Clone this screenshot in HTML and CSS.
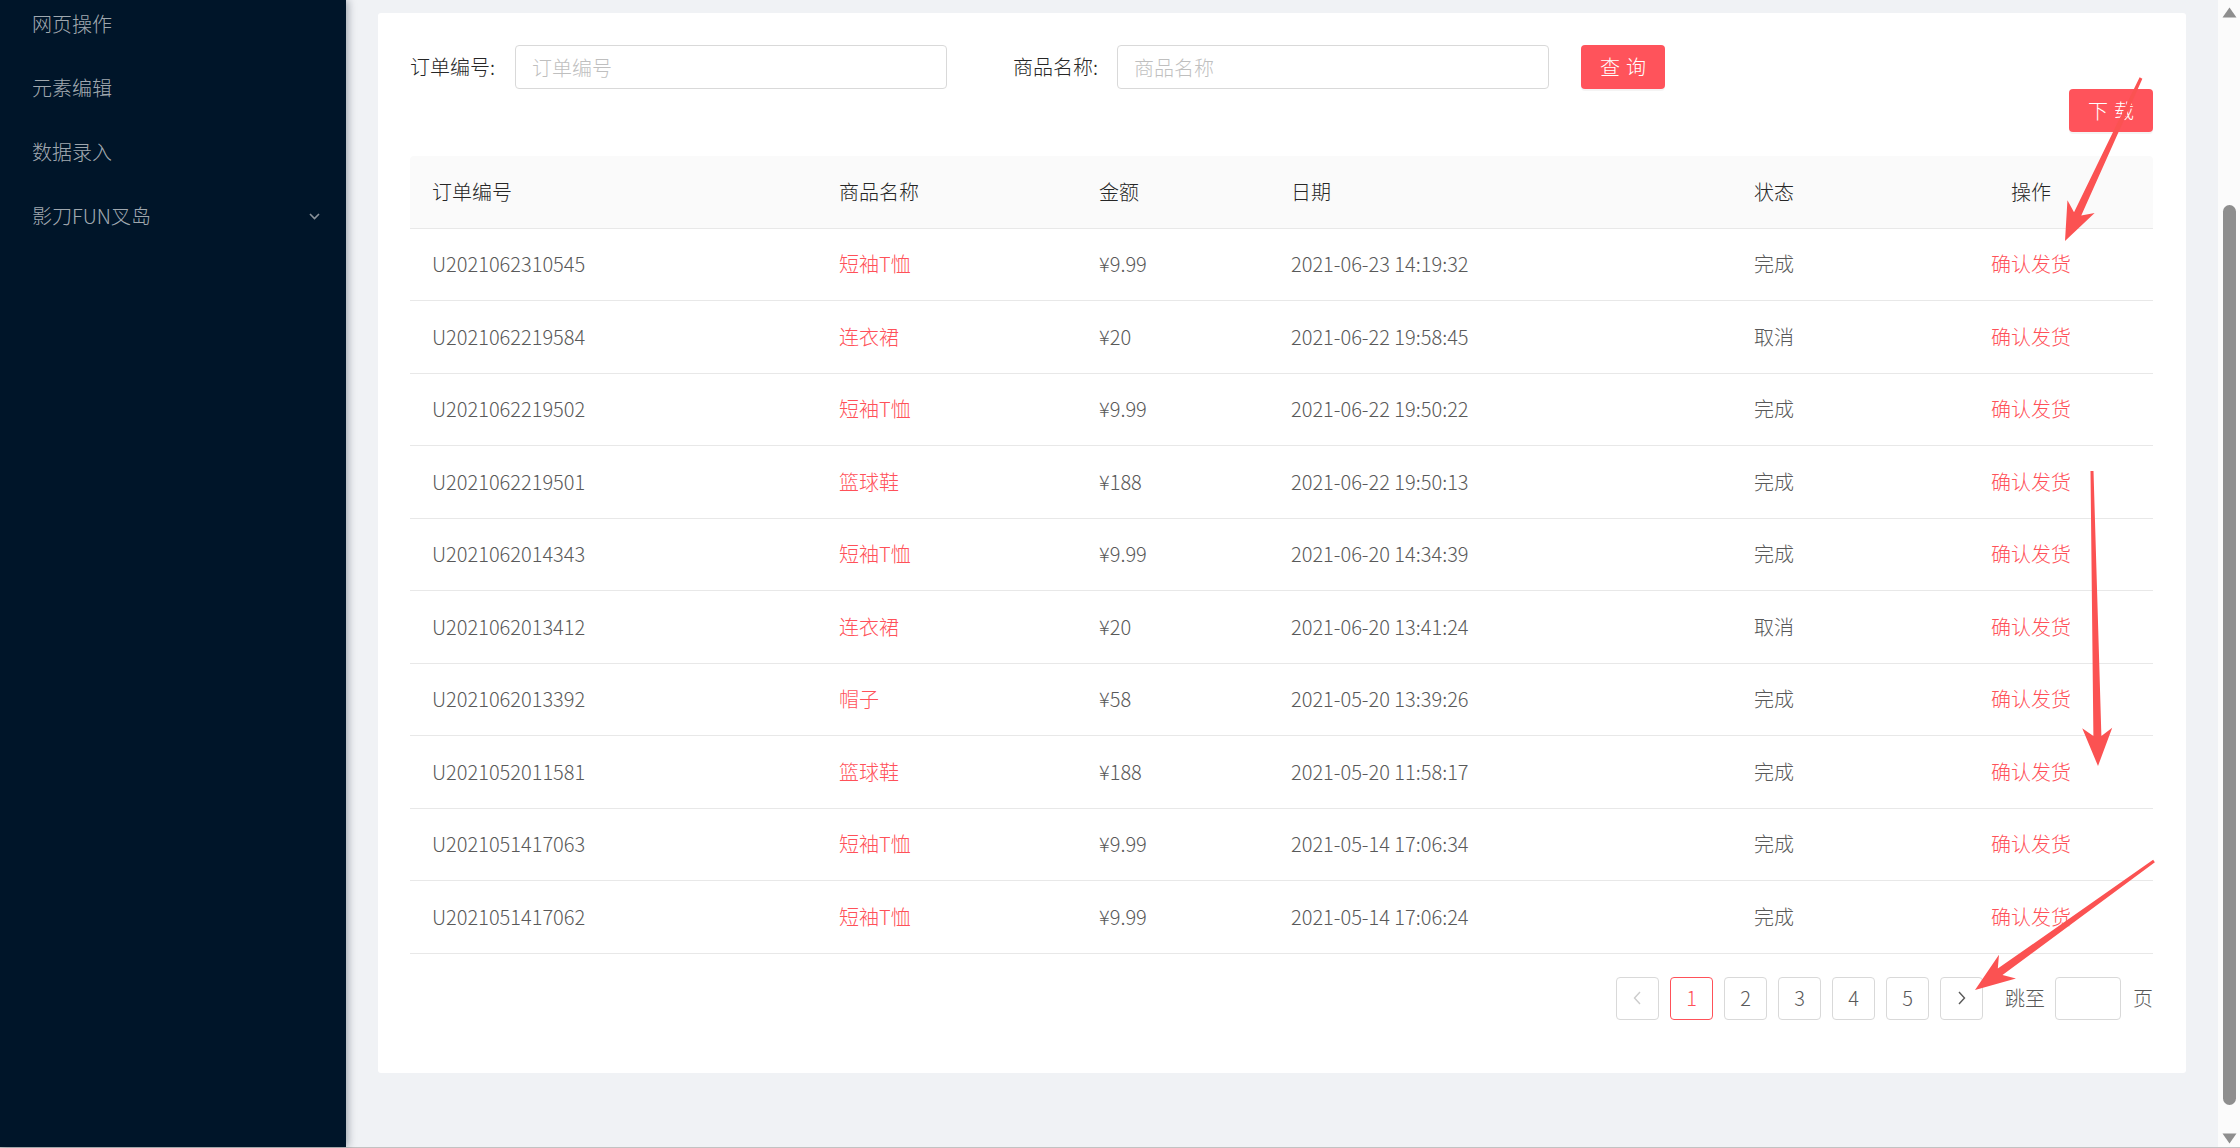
FILE: index.html
```html
<!DOCTYPE html>
<html lang="zh-CN">
<head>
<meta charset="utf-8">
<title>订单管理</title>
<link rel="stylesheet" href="styles.css">
</head>
<body>
<div class="app">
  <aside class="sider">
    <ul class="menu">
      <li class="menu-item">网页操作</li>
      <li class="menu-item">元素编辑</li>
      <li class="menu-item">数据录入</li>
      <li class="menu-item">影刀FUN叉岛
        <svg class="chev" width="11" height="7" viewBox="0 0 11 7"><polyline points="1,1 5.5,5.5 10,1" fill="none" stroke="#8a929a" stroke-width="1.6"/></svg>
      </li>
    </ul>
  </aside>

  <main class="main">
    <div class="card">
      <div class="search">
        <div class="form-item">
          <label class="label">订单编号:</label>
          <input class="input" placeholder="订单编号">
        </div>
        <div class="form-item item-gap">
          <label class="label label-2">商品名称:</label>
          <input class="input" placeholder="商品名称">
        </div>
        <button class="btn btn-query"><span>查询</span></button>
      </div>

      <div class="toolbar">
        <button class="btn btn-down"><span>下载</span></button>
      </div>

      <div class="table">
        <div class="row head">
          <div class="cell">订单编号</div>
          <div class="cell">商品名称</div>
          <div class="cell">金额</div>
          <div class="cell">日期</div>
          <div class="cell">状态</div>
          <div class="cell center">操作</div>
        </div>
        <div class="row"><div class="cell">U2021062310545</div><div class="cell red">短袖T恤</div><div class="cell">¥9.99</div><div class="cell">2021-06-23 14:19:32</div><div class="cell">完成</div><div class="cell center red">确认发货</div></div>
        <div class="row"><div class="cell">U2021062219584</div><div class="cell red">连衣裙</div><div class="cell">¥20</div><div class="cell">2021-06-22 19:58:45</div><div class="cell">取消</div><div class="cell center red">确认发货</div></div>
        <div class="row"><div class="cell">U2021062219502</div><div class="cell red">短袖T恤</div><div class="cell">¥9.99</div><div class="cell">2021-06-22 19:50:22</div><div class="cell">完成</div><div class="cell center red">确认发货</div></div>
        <div class="row"><div class="cell">U2021062219501</div><div class="cell red">篮球鞋</div><div class="cell">¥188</div><div class="cell">2021-06-22 19:50:13</div><div class="cell">完成</div><div class="cell center red">确认发货</div></div>
        <div class="row"><div class="cell">U2021062014343</div><div class="cell red">短袖T恤</div><div class="cell">¥9.99</div><div class="cell">2021-06-20 14:34:39</div><div class="cell">完成</div><div class="cell center red">确认发货</div></div>
        <div class="row"><div class="cell">U2021062013412</div><div class="cell red">连衣裙</div><div class="cell">¥20</div><div class="cell">2021-06-20 13:41:24</div><div class="cell">取消</div><div class="cell center red">确认发货</div></div>
        <div class="row"><div class="cell">U2021062013392</div><div class="cell red">帽子</div><div class="cell">¥58</div><div class="cell">2021-05-20 13:39:26</div><div class="cell">完成</div><div class="cell center red">确认发货</div></div>
        <div class="row"><div class="cell">U2021052011581</div><div class="cell red">篮球鞋</div><div class="cell">¥188</div><div class="cell">2021-05-20 11:58:17</div><div class="cell">完成</div><div class="cell center red">确认发货</div></div>
        <div class="row"><div class="cell">U2021051417063</div><div class="cell red">短袖T恤</div><div class="cell">¥9.99</div><div class="cell">2021-05-14 17:06:34</div><div class="cell">完成</div><div class="cell center red">确认发货</div></div>
        <div class="row"><div class="cell">U2021051417062</div><div class="cell red">短袖T恤</div><div class="cell">¥9.99</div><div class="cell">2021-05-14 17:06:24</div><div class="cell">完成</div><div class="cell center red">确认发货</div></div>
      </div>

      <div class="pager">
        <span class="page disabled"><svg width="9" height="14" viewBox="0 0 9 14"><polyline points="7,1 1.5,7 7,13" fill="none" stroke="#cccccc" stroke-width="1.4"/></svg></span>
        <span class="page active">1</span>
        <span class="page">2</span>
        <span class="page">3</span>
        <span class="page">4</span>
        <span class="page">5</span>
        <span class="page"><svg width="9" height="14" viewBox="0 0 9 14"><polyline points="2,1 7.5,7 2,13" fill="none" stroke="#595959" stroke-width="1.4"/></svg></span>
        <span class="jump-label">跳至</span>
        <input class="jump-input">
        <span class="jump-unit">页</span>
      </div>
    </div>
  </main>

  <div class="scrollbar">
    <svg class="sb-up" width="15" height="11" viewBox="0 0 15 11"><polygon points="7.5,0.5 14.5,10.5 0.5,10.5" fill="#8e8e8e"/></svg>
    <div class="sb-thumb"></div>
    <svg class="sb-down" width="15" height="11" viewBox="0 0 15 11"><polygon points="0.5,0.5 14.5,0.5 7.5,10.5" fill="#8e8e8e"/></svg>
  </div>
</div>

<svg class="annotations" width="2240" height="1148" viewBox="0 0 2240 1148">
  <polygon fill="#fb5252" points="2139.64,77.37 2074.04,212.13 2067.45,200.24 2065,241 2094.63,212.9 2081.28,215.51 2142.36,78.63"/>
  <polygon fill="#fb5252" points="2090.5,471.03 2093.39,736.09 2082.23,728.31 2098,766 2112.23,727.71 2101.39,735.93 2093.5,470.97"/>
  <polygon fill="#fb5252" points="2153.12,859.78 1997.81,968.62 1998.98,954.84 1975,990 2015.94,978.38 2002.49,975.12 2154.88,862.22"/>
</svg>
</body>
</html>
```

FILE: styles.css
```css
* { box-sizing: border-box; }

html, body {
  margin: 0;
  padding: 0;
  width: 2240px;
  height: 1148px;
  overflow: hidden;
  font-family: "Noto Sans CJK SC", "Noto Sans", "Liberation Sans", sans-serif;
  font-size: 20px;
  font-weight: 300;
  color: #595959;
}

.app {
  display: flex;
  width: 2240px;
  height: 1148px;
  border-bottom: 1px solid #c2c2c2;
}

/* Sidebar */
.sider {
  width: 346px;
  flex: 0 0 346px;
  background: #001529;
  box-shadow: 2px 0 8px rgba(0, 21, 41, 0.35);
  position: relative;
  z-index: 1;
  overflow: hidden;
}

.menu {
  list-style: none;
  margin: -8.67px 0 0 0;
  padding: 0;
}

.menu-item {
  height: 64.33px;
  display: flex;
  align-items: center;
  padding: 0 26px 0 32px;
  color: rgba(255, 255, 255, 0.65);
  font-size: 20px;
  line-height: 1;
}

.chev { margin-left: auto; }

/* Main */
.main {
  flex: 1;
  background: #f0f2f5;
  padding: 13px 32px 0 32px;
}

.card {
  background: #fff;
  border-radius: 3px;
  padding: 32px 33px 53px 32px;
}

.search {
  display: flex;
  align-items: center;
  height: 44px;
}

.form-item {
  display: flex;
  align-items: center;
}

.item-gap { margin-left: 66px; }

.label {
  width: 105px;
  color: #262626;
  line-height: 1;
}

.label-2 { width: 104px; }

.input {
  width: 432px;
  height: 44px;
  border: 1px solid #d9d9d9;
  border-radius: 4px;
  padding: 0 16px;
  font-family: inherit;
  font-size: 20px;
  font-weight: 300;
  color: #595959;
  outline: none;
  background: #fff;
}

.input::placeholder { color: #bfbfbf; }

.btn {
  width: 84px;
  border: none;
  border-radius: 4px;
  background: #ff535b;
  color: #fff;
  font-family: inherit;
  font-size: 20px;
  font-weight: 300;
  line-height: 1;
  padding: 0;
  box-shadow: 0 2px 0 rgba(0, 0, 0, 0.045);
}

.btn span {
  letter-spacing: 0.3em;
  margin-right: -0.3em;
}

.btn-query {
  height: 44px;
  margin-left: 32px;
}

.toolbar {
  display: flex;
  justify-content: flex-end;
}

.btn-down {
  height: 43px;
}

/* Table */
.table {
  margin-top: 24px;
}

.row {
  display: grid;
  grid-template-columns: 407px 260px 192px 463px 177px 244px;
  height: 72.5px;
  border-bottom: 1px solid #e8e8e8;
  align-items: center;
}

.row.head {
  background: #fafafa;
  color: #262626;
  border-radius: 4px 4px 0 0;
}

.cell {
  padding-left: 22px;
  line-height: 1;
  white-space: nowrap;
}

.cell.center {
  padding-left: 0;
  text-align: center;
}

.red { color: #ff5159; }

/* Pagination */
.pager {
  margin-top: 23px;
  display: flex;
  justify-content: flex-end;
  align-items: center;
  height: 43px;
}

.page {
  width: 43px;
  height: 43px;
  border: 1px solid #d9d9d9;
  border-radius: 4px;
  display: flex;
  align-items: center;
  justify-content: center;
  margin-right: 11px;
  color: #595959;
  line-height: 1;
  background: #fff;
}

.page:nth-child(7) { margin-right: 0; }

.page.active {
  border-color: #ff5159;
  color: #ff5159;
}

.jump-label {
  margin-left: 22px;
  line-height: 1;
}

.jump-input {
  margin-left: 10px;
  width: 66px;
  height: 43px;
  border: 1px solid #d9d9d9;
  border-radius: 4px;
  outline: none;
  background: #fff;
}

.jump-unit {
  margin-left: 12px;
  line-height: 1;
}

/* Fake scrollbar */
.scrollbar {
  width: 22px;
  flex: 0 0 22px;
  background: #fbfbfb;
  display: flex;
  flex-direction: column;
  align-items: flex-start;
  padding: 7px 0 0 4px;
}

.sb-thumb {
  margin-top: 187px;
  margin-left: 1px;
  width: 13px;
  height: 900px;
  border-radius: 7px;
  background: #8e8e8e;
}

.sb-down {
  margin-top: 28px;
}

/* Annotation overlay */
.annotations {
  position: absolute;
  left: 0;
  top: 0;
  pointer-events: none;
  z-index: 5;
}
```
